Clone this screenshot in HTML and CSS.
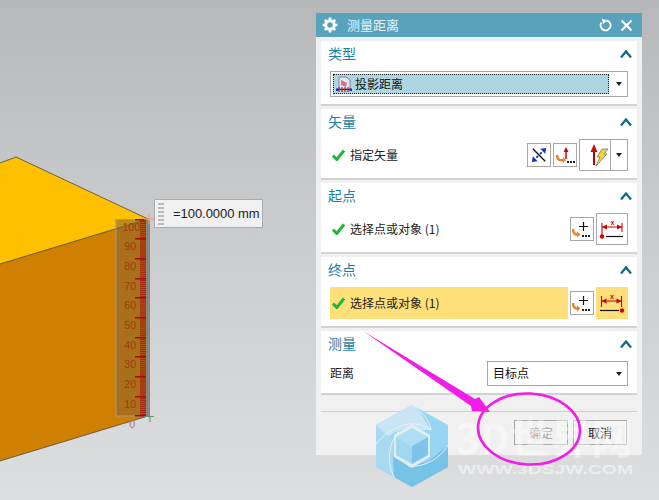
FILE: index.html
```html
<!DOCTYPE html>
<html lang="zh">
<head>
<meta charset="utf-8">
<title>测量距离</title>
<link rel="stylesheet" href="styles.css">
</head>
<body>
<main class="viewport">
  <svg class="scene" width="659" height="500" viewBox="0 0 659 500">
    <defs>
      <pattern id="minor" x="0" y="219" width="6" height="1.97" patternUnits="userSpaceOnUse">
        <rect width="6" height="0.9" fill="#a0100a"/>
      </pattern>
    </defs>
    <polygon points="0,163 16,157 148,219 0,264" fill="#ffc000"/>
    <polygon points="0,264 148,219 148,416 0,461" fill="#d08000"/>
    <polyline points="0,163 16,157 148,219 0,264" fill="none" stroke="#4a4a3a" stroke-width="0.8"/>
    <line x1="0" y1="461" x2="148" y2="416" stroke="#4a4a4a" stroke-width="0.8"/>
    <rect x="116" y="219.500" width="32" height="196.500" fill="#8a6030" fill-opacity=".55" stroke="#a09a90"/>
    <rect x="140" y="220" width="6" height="196" fill="#a85a10"/>
    <rect x="140" y="220" width="6" height="196" fill="url(#minor)" opacity=".8"/>
    <rect x="146" y="220" width="4" height="196" fill="#8a8780"/>
    <g class="major">
      <rect x="135" y="219" width="11" height="1.500"/><rect x="135" y="238" width="11" height="1.500"/>
      <rect x="135" y="258" width="11" height="1.500"/><rect x="135" y="278" width="11" height="1.500"/>
      <rect x="135" y="297" width="11" height="1.500"/><rect x="135" y="317" width="11" height="1.500"/>
      <rect x="135" y="337" width="11" height="1.500"/><rect x="135" y="356" width="11" height="1.500"/>
      <rect x="135" y="376" width="11" height="1.500"/><rect x="135" y="396" width="11" height="1.500"/>
      <rect x="135" y="415" width="11" height="1.500"/>
    </g>
    <g class="scale">
      <text x="140" y="231">100</text><text x="136" y="250">90</text><text x="136" y="270">80</text>
      <text x="136" y="290">70</text><text x="136" y="309">60</text><text x="136" y="329">50</text>
      <text x="136" y="349">40</text><text x="136" y="368">30</text><text x="136" y="388">20</text>
      <text x="136" y="408">10</text><text x="135" y="428" class="zero">0</text>
    </g>
    <path d="M144 219h10M149 214v10" stroke="#f0a060" fill="none"/>
    <path d="M144 416.500h10M150 416v6" stroke="#5f9070" fill="none"/>
  </svg>

  <div class="dimension">
    <span class="grip"></span>
    <span class="dimension-value">=100.0000 mm</span>
  </div>

  <section class="dialog">
    <header class="titlebar">
      <svg class="title-gear" width="16" height="16" viewBox="0 0 16 16">
        <circle cx="8" cy="8" r="4.300" fill="none" stroke="#fff" stroke-width="3"/>
        <path d="M8 .6v3M8 12.400v3M.6 8h3M12.400 8h3M2.800 2.800l2 2M11.200 11.200l2 2M13.200 2.800l-2 2M4.800 11.200l-2 2" stroke="#fff" stroke-width="2.600"/>
      </svg>
      <h1 class="title">测量距离</h1>
      <svg class="title-action" width="14" height="14" viewBox="0 0 14 14">
        <path d="M8.500 2.500A5 5 0 1 1 3.500 4.500" fill="none" stroke="#fff" stroke-width="1.800"/>
        <path d="M4 .5 8.800 2.800 5 6.200z" fill="#fff"/>
      </svg>
      <svg class="title-action" width="13" height="13" viewBox="0 0 13 13">
        <path d="M1.500 1.500l10 10M11.500 1.500l-10 10" stroke="#fff" stroke-width="2.200"/>
      </svg>
    </header>

    <div class="sections">
      <section class="group group-short">
        <div class="group-head"><h2 class="group-title">类型</h2><svg class="chevron" width="12" height="8" viewBox="0 0 12 8"><path d="M1 7.500l5-6 5 6" fill="none" stroke="#0f6a8c" stroke-width="2.300"/></svg></div>
        <div class="select select-wide">
          <div class="select-value">
            <svg width="16" height="18" viewBox="0 0 16 18">
              <path d="M3 2h7l4 3v9H3z" fill="#dfe8f2" stroke="#7a8aa0"/>
              <path d="M5 5l6 3-1 4-5-2z" fill="#e86a7a"/>
              <path d="M1 14.500h14" stroke="#c00" stroke-width="1.200"/>
              <path d="M3 12v5M6 12v5M9 12v5M12 12v5" stroke="#c00"/>
              <rect y="13.500" width="2.500" height="2.500" fill="#1a2acb"/><rect x="13.500" y="13.500" width="2.500" height="2.500" fill="#1a2acb"/>
            </svg>
            <span class="select-text">投影距离</span>
          </div>
          <i class="caret"></i>
        </div>
      </section>

      <section class="group">
        <div class="group-head"><h2 class="group-title">矢量</h2><svg class="chevron" width="12" height="8" viewBox="0 0 12 8"><path d="M1 7.500l5-6 5 6" fill="none" stroke="#0f6a8c" stroke-width="2.300"/></svg></div>
        <div class="row">
          <svg class="check" width="13" height="12" viewBox="0 0 13 12"><path d="M1 6.500 4.800 10.500 12 1.500" fill="none" stroke="#22b63c" stroke-width="3"/></svg>
          <span class="row-label">指定矢量</span>
          <span class="tool">
            <svg width="16" height="16" viewBox="0 0 18 18"><path d="M2 2l14 14" stroke="#111" stroke-width="1.500"/><path d="M17 1l-1 6.500-5.500-5.500zM1 17l1-6.500 5.500 5.500z" fill="#1530c0"/><path d="M12 6l-2 2M6 12l2-2" stroke="#1530c0" stroke-width="2"/></svg>
          </span>
          <span class="tool">
            <svg width="20" height="20" viewBox="0 0 20 20"><path d="M11 2l2.500 5h-5z" fill="#c00"/><path d="M11 6v8" stroke="#c00" stroke-width="1.500"/><path d="M2 10c0 5 3 6 7 5" fill="none" stroke="#e8842a" stroke-width="2.500"/><path d="M8 12l3 3-3 3z" fill="#e8842a"/><path d="M12 16h2v2h-2zM15 16h2v2h-2zM18 16h2v2h-2z" fill="#222"/></svg>
          </span>
          <span class="split">
            <span class="split-icon">
              <svg width="26" height="26" viewBox="0 0 26 26"><path d="M12 2l3.500 8h-7z" fill="#c80f0f"/><path d="M12 9v14" stroke="#b00" stroke-width="2"/><path d="M20 7h6l-4 5h3L14 24l4-9h-3z" fill="#f3d43a" stroke="#777" stroke-width=".8"/></svg>
            </span>
            <span class="split-arrow"><i class="caret caret-small"></i></span>
          </span>
        </div>
      </section>

      <section class="group">
        <div class="group-head"><h2 class="group-title">起点</h2><svg class="chevron" width="12" height="8" viewBox="0 0 12 8"><path d="M1 7.500l5-6 5 6" fill="none" stroke="#0f6a8c" stroke-width="2.300"/></svg></div>
        <div class="row">
          <svg class="check" width="13" height="12" viewBox="0 0 13 12"><path d="M1 6.500 4.800 10.500 12 1.500" fill="none" stroke="#22b63c" stroke-width="3"/></svg>
          <span class="row-label">选择点或对象 (1)</span>
          <span class="tool">
            <svg width="20" height="20" viewBox="0 0 20 20"><path d="M11.500 3v9M7 7.500h9" stroke="#111" stroke-width="1.200"/><path d="M1 10c0 4 2 6 5 5.500" fill="none" stroke="#e8842a" stroke-width="2.500"/><path d="M5 12.500l3.500 3-3.500 3z" fill="#e8842a"/><path d="M10 16h2v2h-2zM13 16h2v2h-2zM16 16h2v2h-2z" fill="#222"/></svg>
          </span>
          <span class="tool tool-large">
            <svg width="28" height="24" viewBox="0 0 28 24"><path d="M4 6v14M24 6v9" stroke="#c00" stroke-width="1.100"/><path d="M4 10h20" stroke="#c00"/><path d="M4 10l5-2.500v5zM24 10l-5-2.500v5z" fill="#c00"/><text class="tiny-x" x="12.500" y="8">x</text><path d="M8 19.500h17" stroke="#111" stroke-width="1.200"/><circle cx="4" cy="19.500" r="2.200" fill="#d00"/></svg>
          </span>
        </div>
      </section>

      <section class="group">
        <div class="group-head"><h2 class="group-title">终点</h2><svg class="chevron" width="12" height="8" viewBox="0 0 12 8"><path d="M1 7.500l5-6 5 6" fill="none" stroke="#0f6a8c" stroke-width="2.300"/></svg></div>
        <div class="row">
          <div class="row-active">
            <svg class="check" width="13" height="12" viewBox="0 0 13 12"><path d="M1 6.500 4.800 10.500 12 1.500" fill="none" stroke="#22b63c" stroke-width="3"/></svg>
            <span class="row-label">选择点或对象 (1)</span>
          </div>
          <span class="tool">
            <svg width="20" height="20" viewBox="0 0 20 20"><path d="M11.500 3v9M7 7.500h9" stroke="#111" stroke-width="1.200"/><path d="M1 10c0 4 2 6 5 5.500" fill="none" stroke="#e8842a" stroke-width="2.500"/><path d="M5 12.500l3.500 3-3.500 3z" fill="#e8842a"/><path d="M10 16h2v2h-2zM13 16h2v2h-2zM16 16h2v2h-2z" fill="#222"/></svg>
          </span>
          <span class="tool tool-large tool-active">
            <svg width="28" height="24" viewBox="0 0 28 24"><path d="M3.500 5v11M23.500 5v11" stroke="#c00" stroke-width="1.100"/><path d="M3.500 10h20" stroke="#c00"/><path d="M3.500 10l5-2.500v5zM23.500 10l-5-2.500v5z" fill="#c00"/><text class="tiny-x" x="12" y="8">x</text><path d="M2 19.500h19" stroke="#111" stroke-width="1.200"/><circle cx="24" cy="19.500" r="2.200" fill="#d00"/></svg>
          </span>
        </div>
      </section>

      <section class="group group-last">
        <div class="group-head"><h2 class="group-title">测量</h2><svg class="chevron" width="12" height="8" viewBox="0 0 12 8"><path d="M1 7.500l5-6 5 6" fill="none" stroke="#0f6a8c" stroke-width="2.300"/></svg></div>
        <div class="row row-measure">
          <span class="row-label">距离</span>
          <div class="select select-narrow"><span class="select-text">目标点</span><i class="caret"></i></div>
        </div>
      </section>
    </div>

    <footer class="actions">
      <button class="btn btn-disabled" type="button">确定</button>
      <button class="btn" type="button">取消</button>
    </footer>
  </section>

  <svg class="overlay" width="659" height="500" viewBox="0 0 659 500">
    <g opacity=".92">
      <polygon points="412,405 448,425 448,467 412,487 376,467 376,425" fill="#8fd3f4"/>
      <polygon points="412,405 376,425 376,444 399,430 431,430 420,412" fill="#c5e4f6"/>
      <polygon points="376,425 376,467 394,477 393,440" fill="#a5d9f2"/>
      <polygon points="393,456 394,477 412,487 448,467 448,445 428,462 408,466" fill="#6fc0e8"/>
      <path d="M394 477c-10-20-2-38 6-48M376 444c16-20 40-26 55-14M431 430c-2-10-8-18-19-25M448 445c-8 14-25 23-40 21" fill="none" stroke="#e4f3fb" stroke-width="1"/>
      <polygon points="412,424 394,435 394,457 412,468 430,457 430,435" fill="#e2eef4"/>
      <polygon points="412,428 396,437 412,446 428,437" fill="#a9dcf5"/>
      <polygon points="396,437 412,446 412,464 396,455" fill="#9ad6f3"/>
      <polygon points="428,437 412,446 412,464 428,455" fill="#74c1e8"/>
    </g>
    <text class="wm-big" x="456" y="454">3D世界网</text>
    <text class="wm-small" x="458" y="474" textLength="175" lengthAdjust="spacingAndGlyphs">WWW.3DSJW.COM</text>
    <polygon points="363,331 475,399 479,397 490,412 472,411 471,406" fill="#f21de6"/>
    <ellipse cx="529" cy="429" rx="51" ry="35.500" fill="none" stroke="#f21de6" stroke-width="2.600" transform="rotate(3 529 429)"/>
  </svg>
</main>
</body>
</html>
```

FILE: styles.css
```css
* { box-sizing: border-box; }
html, body { margin: 0; height: 100%; }
body { overflow: hidden; font-family: "Noto Sans CJK SC", "Liberation Sans", sans-serif; }

.viewport {
  position: relative;
  width: 659px;
  height: 500px;
  overflow: hidden;
  background: linear-gradient(180deg, #b7b8ba 0%, #c8c9cb 40%, #dddee0 100%);
}
.scene, .overlay { position: absolute; left: 0; top: 0; }
.overlay { pointer-events: none; }

.major rect { fill: #a80808; }
.scale text {
  font: 10.500px "Liberation Sans", sans-serif;
  fill: #a03a10;
  text-anchor: end;
}
.scale .zero { fill: #b07878; }

.dimension {
  position: absolute;
  left: 154px;
  top: 199px;
  width: 109px;
  height: 29px;
  display: flex;
  align-items: center;
  background: #f0f0f0;
  border: 1px solid #aaa;
}
.grip {
  width: 6px;
  height: 24px;
  margin-left: 3px;
  background-image: radial-gradient(circle, #b5b5b5 1.3px, transparent 1.5px);
  background-size: 3.300px 4px;
}
.dimension-value {
  margin-left: 9px;
  font: 13px "Liberation Sans", sans-serif;
  letter-spacing: -.05px;
  color: #222;
  white-space: nowrap;
}

.dialog {
  position: absolute;
  left: 316px;
  top: 13px;
  width: 326px;
  height: 442px;
  display: flex;
  flex-direction: column;
  background: #f0f0f0;
}
.titlebar {
  height: 24px;
  flex: none;
  display: flex;
  align-items: center;
  gap: 8px;
  padding: 0 9px 0 6px;
  background: #58a2bc;
}
.title-gear { flex: none; }
.title {
  flex: 1;
  margin: 0 0 0 1px;
  font-size: 13px;
  font-weight: 400;
  color: #e6f4f8;
  line-height: 24px;
}
.title-action { flex: none; }

.sections {
  display: flex;
  flex-direction: column;
  gap: 3px;
  padding: 4px 5px 0;
}
.group {
  height: 71px;
  padding: 0 9px;
  background: #fff;
  border-bottom: 2px solid #d2d2d2;
}
.group-short { height: 65px; }
.group-last { height: 64px; }
.group-head {
  height: 26px;
  display: flex;
  align-items: center;
  justify-content: space-between;
}
.group-title {
  margin: -2px 0 0 -2px;
  font-size: 14px;
  line-height: 26px;
  font-weight: 400;
  color: #1c7fa8;
}
.chevron { margin-right: -4px; }

.select {
  display: flex;
  align-items: center;
  background: #fff;
  border: 1px solid #a8a8a8;
  font-size: 12px;
  color: #111;
}
.select-text { margin-top: -2px; }
.select-wide { height: 26px; margin-top: 4px; padding: 2px 0 2px 2px; }
.select-value {
  flex: 1;
  height: 100%;
  display: flex;
  align-items: center;
  gap: 3px;
  padding-left: 2px;
  background: #add6e2;
  border: 1px dotted #222;
}
.select-narrow {
  width: 141px;
  height: 25px;
  padding-left: 5px;
  justify-content: space-between;
}
.caret {
  flex: none;
  width: 0;
  height: 0;
  margin: 0 5px 0 7px;
  border-style: solid;
  border-width: 4px 3.500px 0;
  border-color: #222 transparent transparent;
}
.caret-small {
  margin: 0;
  border-width: 4px 3.500px 0;
}

.row {
  display: flex;
  align-items: center;
  gap: 2px;
  height: 32px;
  margin-top: 4px;
}
.row-measure { justify-content: space-between; height: 25px; }
.check { flex: none; margin: 0 5px 0 2px; }
.row > .check { margin-right: 3px; }
.row-label {
  flex: 1;
  margin-top: -2px;
  font-size: 12px;
  color: #222;
  white-space: nowrap;
}
.row-active {
  flex: 1;
  height: 32px;
  display: flex;
  align-items: center;
  background: #ffdf7a;
}
.tool {
  flex: none;
  width: 24px;
  height: 24px;
  display: flex;
  align-items: center;
  justify-content: center;
  background: #fff;
  border: 1px solid #a8a8a8;
}
.tool-large { width: 32px; height: 32px; }
.tool-active { background: #ffdf7a; border-color: #ffdf7a; }
.tiny-x { font: bold 7px "Liberation Sans", sans-serif; fill: #c00; }
.split {
  flex: none;
  display: flex;
  height: 32px;
  border: 1px solid #a8a8a8;
  background: #fff;
}
.split-icon {
  width: 31px;
  display: flex;
  align-items: center;
  justify-content: center;
  border-right: 1px solid #a8a8a8;
}
.split-arrow {
  width: 16px;
  display: flex;
  align-items: center;
  justify-content: center;
}

.actions {
  display: flex;
  justify-content: flex-end;
  gap: 5px;
  margin: 16px 5px 0;
  padding: 8px 10px 0 0;
  border-top: 1px solid #cfcfcf;
}
.btn {
  width: 54px;
  height: 25px;
  padding: 0;
  background: #f0f0f0;
  border: 1px solid #a8a8a8;
  font: 12px "Noto Sans CJK SC", sans-serif;
  color: #222;
}
.btn-disabled { color: #a8a8a8; }

.wm-big {
  font: bold 41px "Noto Sans CJK SC", "Liberation Sans", sans-serif;
  fill: #fff;
  fill-opacity: .42;
}
.wm-small {
  font: bold 12.500px "Liberation Sans", sans-serif;
  fill: #fff;
  fill-opacity: .5;
}
```
